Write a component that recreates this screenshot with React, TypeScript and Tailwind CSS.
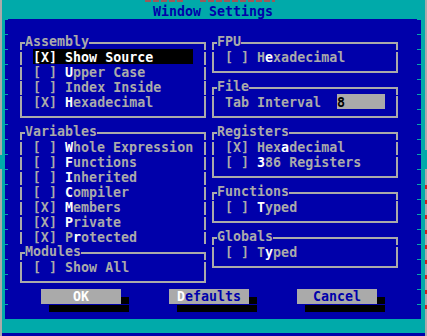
import React from "react";

type ItemProps = { text: string; hot?: number; active?: boolean };

function Item({ text, hot = -1, active = false }: ItemProps) {
  return (
    <div
      className={
        "h-[15px] pt-[2px] leading-[13px] whitespace-pre " +
        (active ? "bg-black text-white" : "text-[#aaaaaa]")
      }
    >
      {text.split("").map((ch, i) => (
        <span key={i} className={i === hot ? "text-white" : ""}>
          {ch}
        </span>
      ))}
    </div>
  );
}

function VLine() {
  return (
    <div className="w-[2px] bg-[repeating-linear-gradient(to_bottom,#aaaaaa_0px,#aaaaaa_1px,transparent_1px,transparent_2.5px,#aaaaaa_2.5px,#aaaaaa_15px)]" />
  );
}

function Box({
  label,
  children,
  bottom = true,
}: {
  label: string;
  children: React.ReactNode;
  bottom?: boolean;
}) {
  return (
    <div className="flex flex-col">
      <div className="flex h-[15px]">
        <div className="w-[5px] mt-[8px] border-l-2 border-t-2 border-[#aaaaaa]" />
        <span className="h-[15px] pt-[1px] leading-[13px] text-[#aaaaaa] whitespace-pre">
          {label}
        </span>
        <div className="flex-1 mt-[8px] border-t-2 border-r-2 border-[#aaaaaa]" />
      </div>
      <div className="flex">
        <VLine />
        <div className="flex-1 px-[11px]">{children}</div>
        <VLine />
      </div>
      {bottom && (
        <div className="h-[15px]">
          <div className="h-[9px] border-x-2 border-b-2 border-[#aaaaaa]" />
        </div>
      )}
    </div>
  );
}

function Button({ children }: { children: React.ReactNode }) {
  return (
    <div className="flex flex-col">
      <div className="flex">
        <div className="w-[80px] h-[15px] bg-[#aaaaaa] text-center pt-[1px] leading-[13px] whitespace-pre">
          {children}
        </div>
        <div className="w-[8px] h-[15px] flex flex-col justify-end">
          <div className="h-[7px] bg-black" />
        </div>
      </div>
      <div className="flex pl-[8px] pt-[1px]">
        <div className="w-[80px] h-[7px] bg-black" />
      </div>
    </div>
  );
}

export default function App() {
  return (
    <div className="flex w-[427px] h-[336px] bg-[#00aaaa] overflow-hidden font-['DejaVu_Sans_Mono',monospace] font-bold text-[13.3px]">
      {/* left edge */}
      <div className="w-[2px] flex flex-col">
        <div className="h-[155px] bg-[#aaaaaa]" />
        <div className="h-[14px] bg-[#00aaaa]" />
        <div className="flex-1 bg-[#aaaaaa]" />
      </div>

      {/* main column */}
      <div className="flex-1 flex flex-col">
        <div className="h-[19px] flex flex-col">
          <div className="h-[3px] flex pl-[143px]">
            <div className="w-[40px] h-[2px] bg-[repeating-linear-gradient(to_right,#9a5a5a_0px,#9a5a5a_6px,transparent_6px,transparent_8px)]" />
            <div className="ml-[15px] w-[75px] h-[2px] bg-[repeating-linear-gradient(to_right,#9a5a5a_0px,#9a5a5a_6px,transparent_6px,transparent_8px)]" />
          </div>
          <div className="pl-[151px] pt-[2px] leading-[13px] text-[#0000aa] whitespace-pre">
            Window Settings
          </div>
        </div>

        <div className="flex h-[300px]">
          <div className="w-[3px] bg-[#00aaaa]" />
          {/* dialog */}
          <div className="w-[416px] bg-[#0000aa] flex">
            <div className="w-[3px] h-full bg-[repeating-linear-gradient(to_bottom,#00aaaa_0px,#00aaaa_1px,transparent_1px,transparent_15px)]" />
            <div className="flex-1 flex flex-col pt-[15px]">
              <div className="flex gap-[6px] pl-[12px]">
                <div className="w-[186px] flex flex-col">
                  <Box label="Assembly">
                    <Item text="[X] Show Source" active />
                    <Item text="[ ] Upper Case" hot={4} />
                    <Item text="[ ] Index Inside" />
                    <Item text="[X] Hexadecimal" hot={4} />
                  </Box>
                  <Box label="Variables" bottom={false}>
                    <Item text="[ ] Whole Expression" hot={4} />
                    <Item text="[ ] Functions" hot={4} />
                    <Item text="[ ] Inherited" hot={4} />
                    <Item text="[ ] Compiler" hot={4} />
                    <Item text="[X] Members" hot={4} />
                    <Item text="[X] Private" hot={4} />
                    <Item text="[X] Protected" hot={5} />
                  </Box>
                  <Box label="Modules">
                    <Item text="[ ] Show All" />
                  </Box>
                </div>
                <div className="w-[186px] flex flex-col">
                  <Box label="FPU">
                    <Item text="[ ] Hexadecimal" hot={5} />
                  </Box>
                  <Box label="File">
                    <div className="h-[15px] flex justify-between">
                      <span className="pt-[2px] leading-[13px] text-[#aaaaaa] whitespace-pre">
                        Tab Interval
                      </span>
                      <span className="w-[48px] h-[15px] bg-[#aaaaaa] text-black pt-[2px] leading-[13px]">
                        8
                      </span>
                    </div>
                  </Box>
                  <Box label="Registers">
                    <Item text="[X] Hexadecimal" hot={7} />
                    <Item text="[ ] 386 Registers" hot={4} />
                  </Box>
                  <Box label="Functions">
                    <Item text="[ ] Typed" hot={4} />
                  </Box>
                  <Box label="Globals">
                    <Item text="[ ] Typed" hot={5} />
                  </Box>
                </div>
              </div>
              <div className="flex gap-[40px] pl-[33px]">
                <Button>
                  <span className="text-white">OK</span>
                </Button>
                <Button>
                  <span className="text-white">D</span>
                  <span className="text-[#0000aa]">efaults</span>
                </Button>
                <Button>
                  <span className="text-[#0000aa]">Cancel</span>
                </Button>
              </div>
            </div>
            <div className="w-[4px] h-full bg-[repeating-linear-gradient(to_bottom,#00aaaa_0px,#00aaaa_1px,transparent_1px,transparent_15px)]" />
          </div>
          <div className="w-[4px] bg-[#00aaaa]" />
        </div>

        <div className="h-[14px] bg-[#00aaaa]" />
        <div className="h-[3px] bg-[#0000aa]" />
      </div>

      {/* right edge */}
      <div className="w-[2px] flex flex-col">
        <div className="h-[150px] bg-[#aaaaaa]" />
        <div className="h-[19px] bg-[#00aaaa]" />
        <div className="h-[16px] bg-[#aaaaaa]" />
        <div className="h-[135px] bg-[repeating-linear-gradient(to_bottom,#cc2020_0px,#cc2020_4px,#aaaaaa_4px,#aaaaaa_15px)]" />
        <div className="flex-1 bg-[#aaaaaa]" />
      </div>
    </div>
  );
}
